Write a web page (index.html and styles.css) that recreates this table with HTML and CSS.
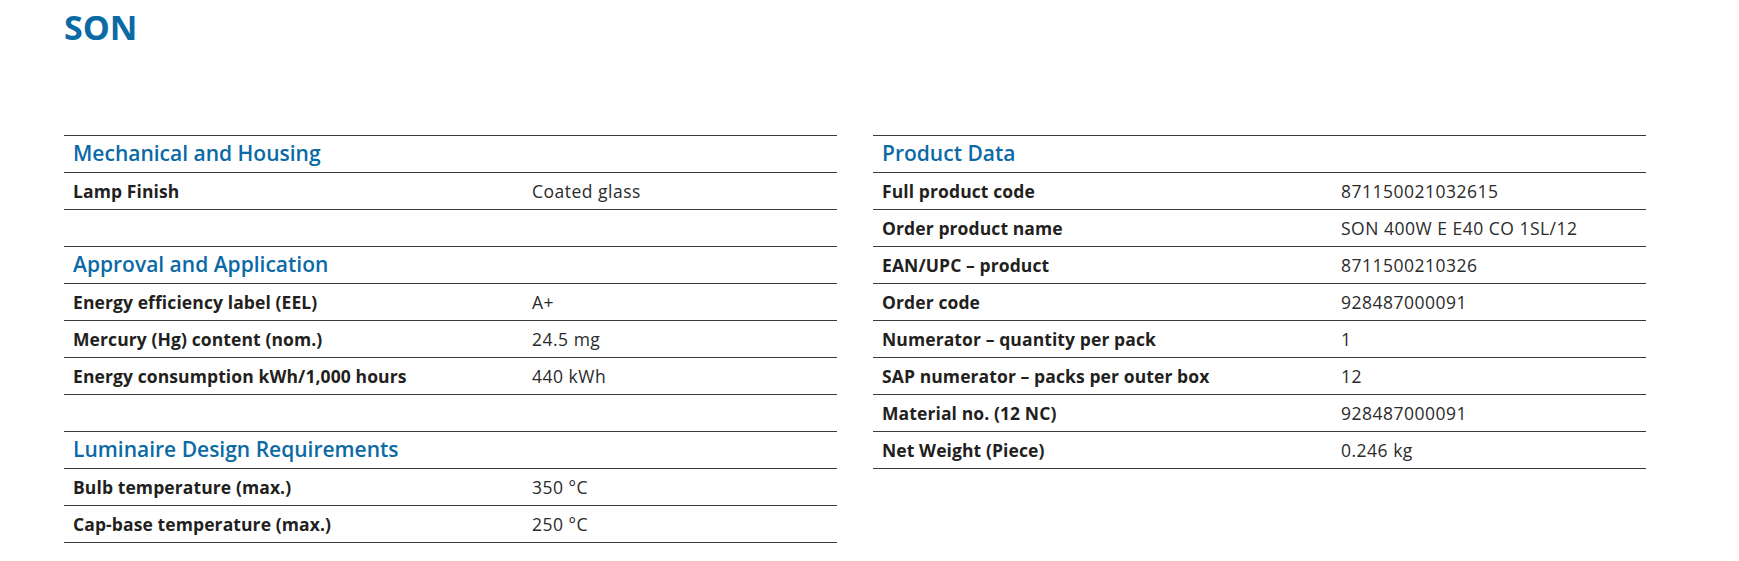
FILE: index.html
```html
<!DOCTYPE html>
<html lang="en">
<head>
<meta charset="utf-8">
<title>SON</title>
<link rel="stylesheet" href="styles.css">
</head>
<body>
<div class="page">
  <h1 class="title">SON</h1>
  <div class="tables">
    <div class="table">
      <div class="row head"><div class="cell">Mechanical and Housing</div></div>
      <div class="row"><div class="label">Lamp Finish</div><div class="value">Coated glass</div></div>
      <div class="row empty"><div class="label"></div><div class="value"></div></div>
      <div class="row head"><div class="cell">Approval and Application</div></div>
      <div class="row"><div class="label">Energy efficiency label (EEL)</div><div class="value">A+</div></div>
      <div class="row"><div class="label">Mercury (Hg) content (nom.)</div><div class="value">24.5 mg</div></div>
      <div class="row"><div class="label">Energy consumption kWh/1,000 hours</div><div class="value">440 kWh</div></div>
      <div class="row empty"><div class="label"></div><div class="value"></div></div>
      <div class="row head"><div class="cell">Luminaire Design Requirements</div></div>
      <div class="row"><div class="label">Bulb temperature (max.)</div><div class="value">350 °C</div></div>
      <div class="row"><div class="label">Cap-base temperature (max.)</div><div class="value">250 °C</div></div>
    </div>
    <div class="table">
      <div class="row head"><div class="cell">Product Data</div></div>
      <div class="row"><div class="label">Full product code</div><div class="value">871150021032615</div></div>
      <div class="row"><div class="label">Order product name</div><div class="value">SON 400W E E40 CO 1SL/12</div></div>
      <div class="row"><div class="label">EAN/UPC – product</div><div class="value">8711500210326</div></div>
      <div class="row"><div class="label">Order code</div><div class="value">928487000091</div></div>
      <div class="row"><div class="label">Numerator – quantity per pack</div><div class="value">1</div></div>
      <div class="row"><div class="label">SAP numerator – packs per outer box</div><div class="value">12</div></div>
      <div class="row"><div class="label">Material no. (12 NC)</div><div class="value">928487000091</div></div>
      <div class="row"><div class="label">Net Weight (Piece)</div><div class="value">0.246 kg</div></div>
    </div>
  </div>
</div>
</body>
</html>
```
FILE: styles.css
```css
html, body {
  margin: 0;
  padding: 0;
  background: #ffffff;
}

body {
  font-family: "Open Sans", "Liberation Sans", sans-serif;
  color: #231f20;
}

.page {
  padding: 11px 0 0 64px;
}

.title {
  margin: 0 0 91px 0;
  font-size: 34px;
  line-height: 33px;
  font-weight: 700;
  color: #0b6aa6;
}

.tables {
  display: flex;
  gap: 36px;
  align-items: flex-start;
}

.table {
  width: 773px;
  border-top: 1px solid #3a3a3a;
}

.row {
  display: grid;
  grid-template-columns: 459px 1fr;
  height: 36px;
  border-bottom: 1px solid #3a3a3a;
  align-items: center;
}

.row.head {
  grid-template-columns: 1fr;
}

.cell {
  padding-left: 9px;
  padding-bottom: 3px;
  font-size: 21px;
  font-weight: 600;
  color: #0b6aa6;
}

.label {
  padding-left: 9px;
  font-size: 17.5px;
  letter-spacing: 0.1px;
  font-weight: 700;
  color: #231f20;
}

.value {
  padding-left: 9px;
  font-size: 17.5px;
  letter-spacing: 0.5px;
  font-weight: 400;
  color: #2b2b2b;
}
```
